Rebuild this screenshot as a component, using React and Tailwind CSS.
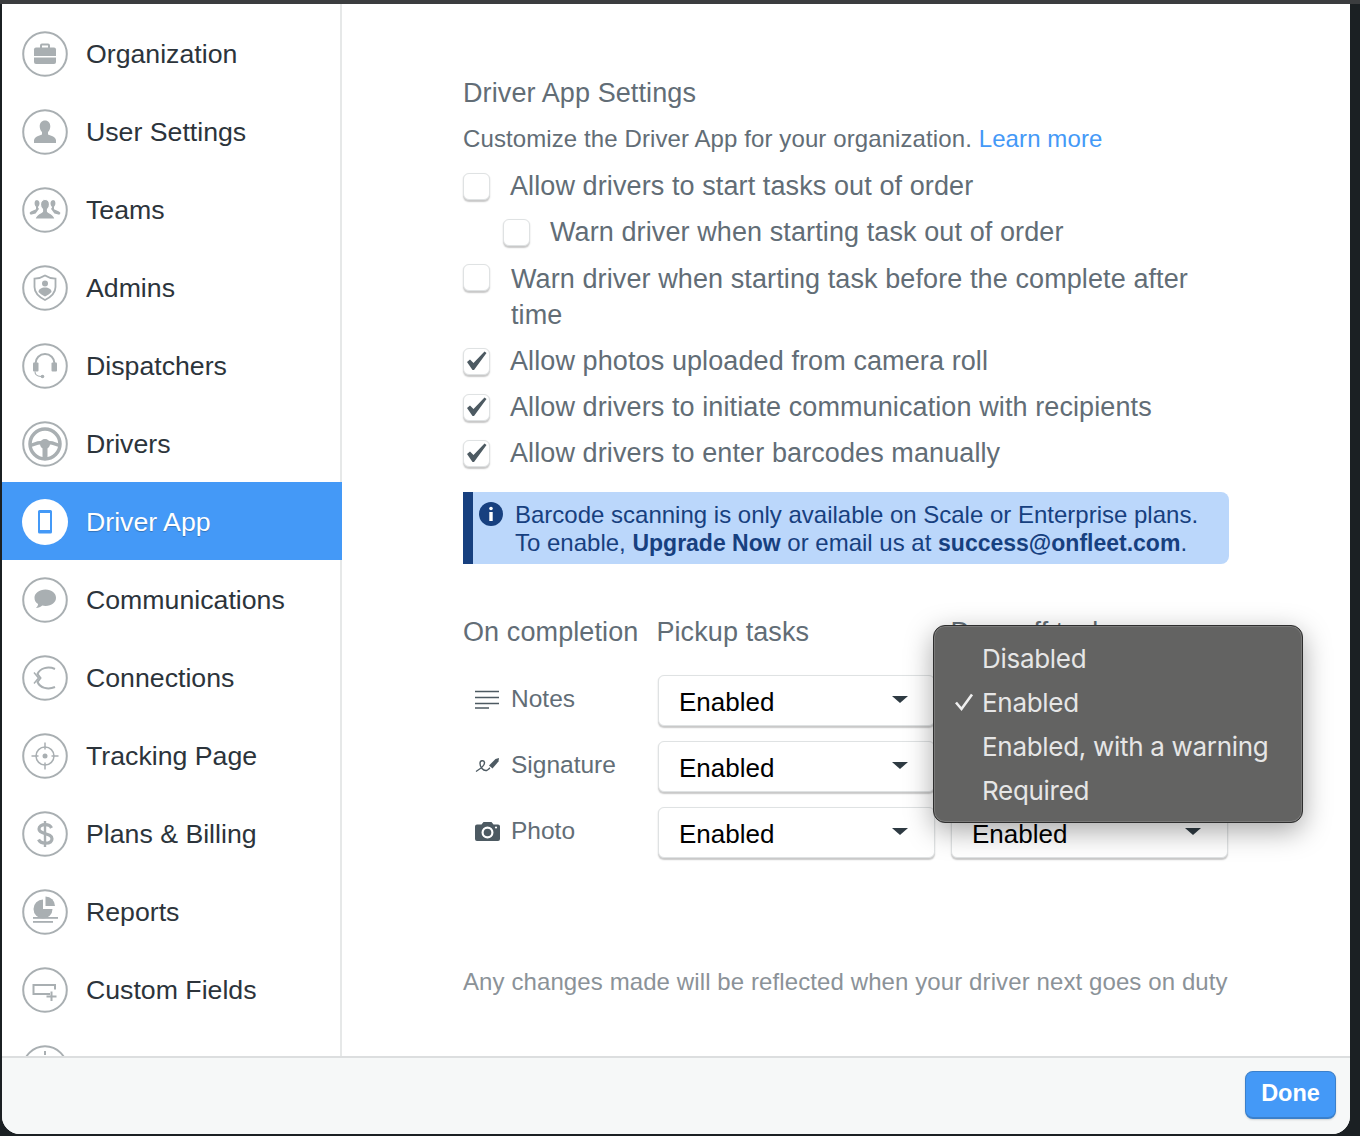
import React from 'react';

const grey = '#a9afb2';

const icons = {
    organization: (
        <g fill={grey}>
            <path d="M18 17v-2.500a2 2 0 0 1 2-2h6a2 2 0 0 1 2 2V17h-2v-2.500h-6V17z" />
            <path d="M14 16.500h18a2 2 0 0 1 2 2v6.500H12v-6.500a2 2 0 0 1 2-2z" />
            <path d="M12 26.500h22V31a2 2 0 0 1-2 2H14a2 2 0 0 1-2-2z" />
        </g>
    ),
    user: (
        <path fill={grey} d="M23 11.500c3.300 0 5.300 2.600 5.300 5.800 0 2.500-.9 4.500-2.300 5.700v2.300c0 1.200 8 1.700 8 6.200V34H12v-2.500c0-4.500 8-5 8-6.200V23c-1.400-1.200-2.300-3.200-2.300-5.700 0-3.200 2-5.800 5.300-5.800z" />
    ),
    teams: (
        <g fill={grey}>
            <path d="M14.500 13c1.900 0 3 1.500 3 3.300 0 1.500-.5 2.700-1.400 3.400v1.300l1 .8-3.500 4.700-4.900 1.200-1.200-1.700c1.200-2.400 6.500-3 6.500-4v-2.300c-.9-.7-1.400-1.900-1.400-3.400 0-1.800 .6-3.300 2.400-3.300z" />
            <path d="M31.500 13c-1.900 0-3 1.500-3 3.300 0 1.500.5 2.700 1.400 3.400v1.300l-1 .8 3.500 4.700 4.900 1.200 1.200-1.700c-1.200-2.400-6.500-3-6.500-4v-2.300c.9-.7 1.400-1.900 1.400-3.400 0-1.800-.6-3.300-2.400-3.300z" />
            <path d="M23 12.500c2.800 0 4.500 2.100 4.500 4.900 0 2.200-.8 3.900-2 4.900v2.200c0 1.100 6.500 1.800 7.500 7.500H13c1-5.700 7.500-6.400 7.500-7.500v-2.200c-1.200-1-2-2.700-2-4.900 0-2.800 1.700-4.900 4.500-4.900z" stroke="white" strokeWidth="1.200" />
        </g>
    ),
    admins: (
        <g>
            <path d="M23 10.500c3 2 6.500 3 10.500 3.200v8.300c0 5.700-4 9.700-10.500 13-6.500-3.300-10.500-7.300-10.500-13v-8.300c4-.2 7.500-1.200 10.500-3.200z" fill="none" stroke={grey} strokeWidth="1.800" />
            <circle cx="23" cy="18.500" r="3" fill={grey} />
            <path d="M16.500 27c0-2.800 3-4.500 6.500-4.500s6.500 1.700 6.500 4.500c-1.800 1.900-3.900 3.300-6.500 4.500-2.600-1.200-4.700-2.600-6.500-4.500z" fill={grey} />
        </g>
    ),
    dispatchers: (
        <g>
            <path d="M13.500 25v-4.500a9.500 9.500 0 0 1 19 0V25" fill="none" stroke={grey} strokeWidth="2" />
            <rect x="11" y="19.500" width="5.500" height="9" rx="1" fill={grey} />
            <rect x="29.500" y="19.500" width="5.500" height="9" rx="1" fill={grey} />
            <path d="M13 28.500c0 3 1 4.500 6 5" fill="none" stroke={grey} strokeWidth="1.200" />
            <circle cx="20.500" cy="33.500" r="1.800" fill={grey} />
        </g>
    ),
    drivers: (
        <g>
            <circle cx="23" cy="23" r="15" fill="none" stroke={grey} strokeWidth="3.500" />
            <path d="M8.500 24.500Q23 18 37.500 24.500" fill="none" stroke={grey} strokeWidth="3.500" />
            <circle cx="23" cy="23" r="5" fill={grey} />
            <rect x="20.500" y="24" width="5" height="14" fill={grey} />
        </g>
    ),
    app: (
        <path fillRule="evenodd" fill="#4499f7" d="M17.500 11h11a1.500 1.500 0 0 1 1.500 1.500v20.500a1.500 1.500 0 0 1-1.500 1.500h-11a1.500 1.500 0 0 1-1.500-1.500V12.500a1.500 1.500 0 0 1 1.500-1.500zM18 14v17h10V14z" />
    ),
    communications: (
        <path fill={grey} d="M23.500 12.500c6.300 0 10.500 3.700 10.500 8.300s-4.200 8.200-10.500 8.200c-1.200 0-2.300-.1-3.300-.4-1.500 1.600-3.700 2.400-6.200 2.400 1.200-1 1.900-2.200 2.100-3.900-2.700-1.500-3.600-3.900-3.600-6.300 0-4.600 4.700-8.300 11-8.300z" />
    ),
    connections: (
        <g fill="none" stroke={grey} strokeWidth="2">
            <path d="M33 14c-7-3-15-1-17.500 5l3 4-3 4c2.500 6 10.500 8 17.500 5" />
            <path d="M12 17.500l4.500 5.500-4.500 5.500" strokeWidth="1.500" />
        </g>
    ),
    tracking: (
        <g fill="none" stroke={grey} strokeWidth="1.500">
            <circle cx="23" cy="23" r="9" />
            <path d="M23 9.500v7M23 29.500v7M9.500 23h7M29.500 23h7" />
            <circle cx="23" cy="23" r="2.500" fill={grey} stroke="none" />
        </g>
    ),
    billing: (
        <g fill="none" stroke={grey} strokeWidth="3.200">
            <path d="M29.500 17c-1-2.200-3.300-3.300-6.300-3.300-3.600 0-6.200 1.600-6.200 4.400 0 6 13 3.200 13 9.600 0 2.900-2.800 4.400-6.500 4.400-3.400 0-5.900-1.300-6.900-3.600" />
            <path d="M23 10v26" strokeWidth="2.400" />
        </g>
    ),
    reports: (
        <g fill={grey}>
            <path d="M21 10.500v9.500h9.500A9.500 9.500 0 1 1 21 10.500z" />
            <path d="M23.500 7.500a9.500 9.500 0 0 1 9.500 9.500h-9.500z" />
            <rect x="11" y="28" width="25" height="1.800" />
            <rect x="11" y="32" width="20" height="1.800" />
        </g>
    ),
    fields: (
        <g fill="none" stroke={grey} strokeWidth="2">
            <path d="M28 27H11.500v-9H33v4.500" />
            <path d="M29.500 24.500v9.500M24.500 29.500h10" />
        </g>
    ),
    more: <path d="M23 6v4" stroke={grey} strokeWidth="2" />,
};

const navItems = [
    ['organization', 'Organization'],
    ['user', 'User Settings'],
    ['teams', 'Teams'],
    ['admins', 'Admins'],
    ['dispatchers', 'Dispatchers'],
    ['drivers', 'Drivers'],
    ['app', 'Driver App'],
    ['communications', 'Communications'],
    ['connections', 'Connections'],
    ['tracking', 'Tracking Page'],
    ['billing', 'Plans & Billing'],
    ['reports', 'Reports'],
    ['fields', 'Custom Fields'],
    ['more', ''],
];

const NavItem = ({ icon, label }) => {
    const active = icon === 'app';
    return (
        <div className={`flex items-center h-[78px] shrink-0 pl-[20px] pt-[2px] ${active ? 'bg-[#4499f7] text-white [text-shadow:0_1px_1px_rgba(0,0,0,0.25)]' : 'text-[#2c343b] border-r-2 border-[#e6e8e8]'}`}>
            <svg width="46" height="46" viewBox="0 0 46 46" className="shrink-0">
                <circle cx="23" cy="23" r={active ? 23 : 21.8} fill={active ? 'white' : 'none'} stroke={active ? 'none' : grey} strokeWidth="2" />
                {icons[icon]}
            </svg>
            <span className="ml-[18px] text-[26.700px] leading-none">{label}</span>
        </div>
    );
};

const Checkbox = ({ checked, className = '' }) => (
    <span className={`relative shrink-0 w-[27px] h-[27px] rounded-[6px] bg-white border border-[#dfe2e3] shadow-[0_1.500px_1.500px_rgba(0,0,0,0.22)] ${className}`}>
        {checked && (
            <svg viewBox="0 0 27 27" className="absolute -inset-px w-[27px] h-[27px]">
                <path d="M4 14l3-2.500 3.500 3.500L21.500 3.500l2 1.500-12.500 17h-1.500z" fill="#4d5a62" />
            </svg>
        )}
    </span>
);

const CheckRow = ({ checked, children, className = '' }) => (
    <div className={`flex items-center h-[46px] ${className}`}>
        <Checkbox checked={checked} />
        <span className="ml-[20px] pt-[1px]">{children}</span>
    </div>
);

const Select = () => (
    <div className="flex-1 flex items-center justify-between h-[51px] pl-[20px] pr-[26px] bg-white rounded-[6px] border border-[#dfe2e3] shadow-[0_1.500px_1.500px_rgba(0,0,0,0.22)] text-black text-[26px] tracking-normal">
        <span className="pt-[3px]">Enabled</span>
        <span className="mb-[3px] w-0 h-0 border-x-[8px] border-x-transparent border-t-[7px] border-t-[#2e3a42]" />
    </div>
);

const completionRows = [
    {
        label: 'Notes',
        icon: <path d="M0 1.500h24M0 7.500h24M0 13.500h24M0 18h14" stroke="#4d5a62" strokeWidth="1.400" fill="none" />,
    },
    {
        label: 'Signature',
        icon: (
            <g>
                <path d="M1 15.500C5 13 10 10 9.500 6.500 9 4 5 4 5 7.500 5 11 8 15 11.500 14.500c1.500-.5 2.500-2 3.500-2.500" fill="none" stroke="#4d5a62" strokeWidth="1.400" />
                <path d="M14 9.500L20.500 3 24 2l-.5 3.500-6 7z" fill="#4d5a62" />
            </g>
        ),
    },
    {
        label: 'Photo',
        icon: (
            <g>
                <path fillRule="evenodd" fill="#4d5a62" d="M2 2.500h4.500L8.500 0h8l2 2.500H23a2 2 0 0 1 2 2V17a2 2 0 0 1-2 2H2a2 2 0 0 1-2-2V4.500a2 2 0 0 1 2-2zM12.500 4.500a6 6 0 1 0 0 12 6 6 0 0 0 0-12z" />
                <circle cx="12.500" cy="10.500" r="3.800" fill="#4d5a62" />
                <circle cx="21" cy="5.500" r="1.100" fill="white" />
            </g>
        ),
    },
];

const CompletionRow = ({ row }) => (
    <div className="flex items-center gap-[16px] h-[51px] pr-[1px]">
        <div className="flex items-center shrink-0 w-[179px] pl-[12px] mb-[3px] text-[#626d76] text-[24.500px] tracking-normal">
            <svg width="25" height="19" viewBox="0 0 25 19" className="shrink-0">{row.icon}</svg>
            <span className="ml-[11px]">{row.label}</span>
        </div>
        <Select />
        <Select />
    </div>
);

const menuOptions = ['Disabled', 'Enabled', 'Enabled, with a warning', 'Required'];

const DropdownMenu = () => (
    <div className="absolute left-[470px] top-[11px] w-[370px] h-[198px] pt-[10px] rounded-[12px] bg-[#636362] border border-[#2e2e2e] shadow-[inset_0_0_0_1px_rgba(255,255,255,0.15),0_8px_28px_rgba(0,0,0,0.35)] text-[#e6e6e6] text-[26px] tracking-[-0.3px] font-['Inter',sans-serif]">
        {menuOptions.map((option) => (
            <div key={option} className="relative flex items-center h-[44px] pl-[48px]">
                {option === 'Enabled' && (
                    <svg width="20" height="20" viewBox="0 0 20 20" className="absolute left-[20px] top-[12px]">
                        <path d="M2 10.500l5.500 6.500L18 2.500" fill="none" stroke="#efefef" strokeWidth="2.600" />
                    </svg>
                )}
                <span>{option}</span>
            </div>
        ))}
    </div>
);

export default function App() {
    return (
        <div className="w-[1360px] h-[1136px] bg-[#1b2023] border-t-[4px] border-[#3b3d3f] box-border font-['Liberation_Sans',Arial,sans-serif] overflow-hidden">
            <div className="ml-[2px] w-[1348px] h-[1130px] flex flex-col bg-white rounded-b-[18px] overflow-hidden">
                <div className="flex flex-1 min-h-0">
                    <aside className="w-[340px] shrink-0 overflow-hidden flex flex-col">
                        <div className="h-[10px] shrink-0 border-r-2 border-[#e6e8e8]" />
                        {navItems.map(([icon, label]) => (
                            <NavItem key={icon} icon={icon} label={label} />
                        ))}
                    </aside>
                    <main className="flex-1 pl-[121px] pt-[70px] text-[24px] tracking-[0.1px] text-[#626d76]">
                        <div className="w-[766px]">
                            <h2 className="h-[36px] pt-[1px] leading-[36px] text-[27px] tracking-[0.1px]">Driver App Settings</h2>
                            <p className="mt-[11px] h-[36px] leading-[36px]">
                                Customize the Driver App for your organization. <span className="text-[#4499f7]">Learn more</span>
                            </p>
                            <div className="mt-[6px] text-[27px] tracking-[0.1px]">
                                <CheckRow>Allow drivers to start tasks out of order</CheckRow>
                                <CheckRow className="pl-[40px]">Warn driver when starting task out of order</CheckRow>
                                <div className="flex items-start py-[5px]">
                                    <Checkbox className="mt-[4px]" />
                                    <span className="ml-[21px] pt-[1px] leading-[36px]">Warn driver when starting task before the complete after time</span>
                                </div>
                                <CheckRow checked>Allow photos uploaded from camera roll</CheckRow>
                                <CheckRow checked>Allow drivers to initiate communication with recipients</CheckRow>
                                <CheckRow checked>Allow drivers to enter barcodes manually</CheckRow>
                            </div>
                            <div className="relative mt-[16px] h-[72px] pl-[42px] pr-[10px] pt-[9px] bg-[#bbd7fb] border-l-[10px] border-[#17407f] rounded-r-[8px] text-[#17407f] leading-[28px] tracking-normal whitespace-nowrap">
                                <svg width="24" height="24" viewBox="0 0 24 24" className="absolute left-[6px] top-[10px]">
                                    <circle cx="12" cy="12" r="12" fill="#17407f" />
                                    <circle cx="12" cy="6.500" r="1.800" fill="white" />
                                    <rect x="10.300" y="10" width="3.400" height="9" fill="white" />
                                </svg>
                                <p>Barcode scanning is only available on Scale or Enterprise plans.</p>
                                <p>To enable, <span className="font-bold text-[23px]">Upgrade Now</span> or email us at <span className="font-bold text-[23px]">success@onfleet.com</span>.</p>
                            </div>
                            <div className="relative mt-[50px]">
                                <div className="flex gap-[18px] h-[36px] pt-[1px] items-center mb-[25px] text-[27px] tracking-[0.1px]">
                                    <span className="whitespace-nowrap">On completion</span>
                                    <span className="w-[276px] shrink-0">Pickup tasks</span>
                                    <span className="whitespace-nowrap">Drop-off tasks</span>
                                </div>
                                <div className="flex flex-col gap-[15px]">
                                    {completionRows.map((row) => (
                                        <CompletionRow key={row.label} row={row} />
                                    ))}
                                </div>
                                <DropdownMenu />
                            </div>
                            <p className="mt-[106px] leading-[36px] text-[#8b9298] whitespace-nowrap">Any changes made will be reflected when your driver next goes on duty</p>
                        </div>
                    </main>
                </div>
                <footer className="h-[78px] shrink-0 flex items-center justify-end pr-[14px] pb-[2px] bg-[#f6f8f8] border-t-2 border-[#dcdedf]">
                    <button className="w-[91px] h-[48px] mt-[-1px] rounded-[8px] bg-[#4499f7] border border-[#3b80cb] border-b-2 shadow-[0_1px_2px_rgba(0,0,0,0.15)] text-white text-[23.500px] font-bold">Done</button>
                </footer>
            </div>
        </div>
    );
}
